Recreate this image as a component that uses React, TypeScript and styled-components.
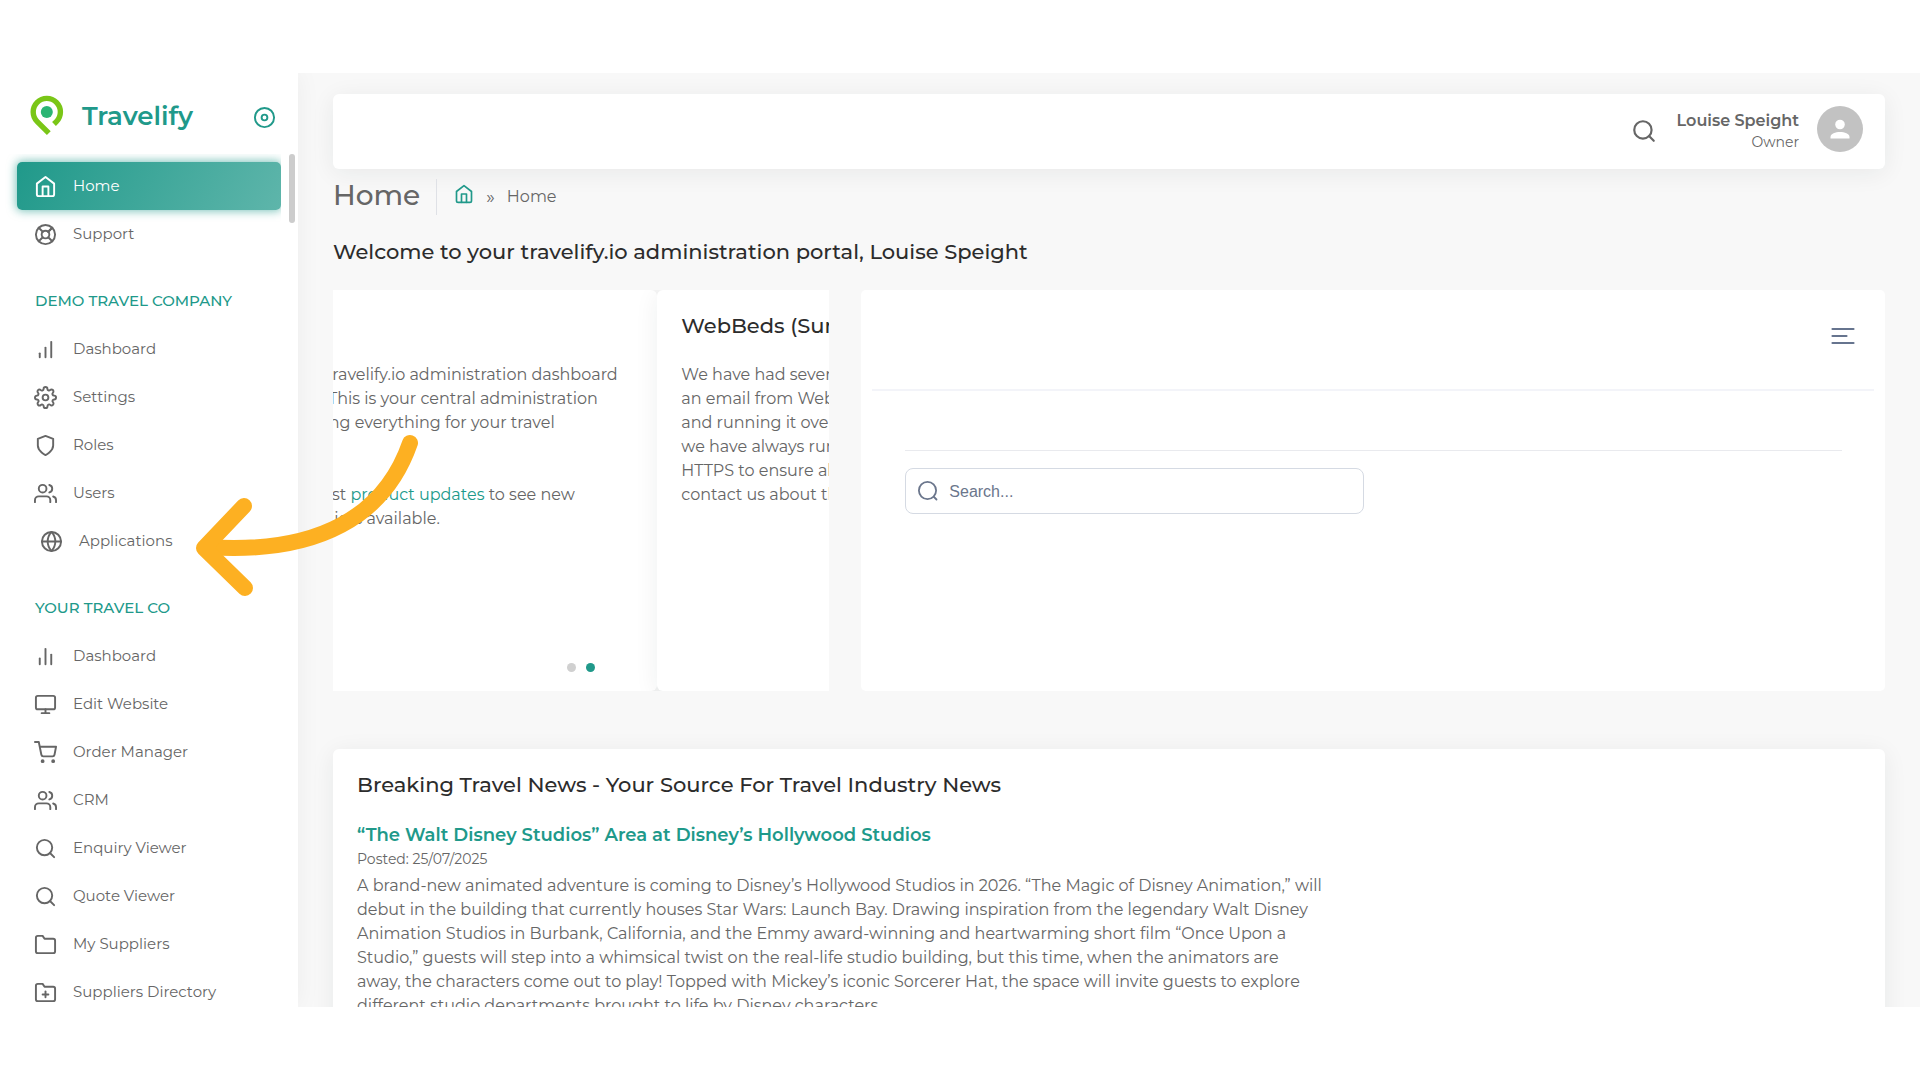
import React from "react";
import styled, { createGlobalStyle, css } from "styled-components";
import type { IconType } from "react-icons";
import {
  FiBarChart,
  FiBarChart2,
  FiDisc,
  FiFolder,
  FiFolderPlus,
  FiGlobe,
  FiHome,
  FiLifeBuoy,
  FiMonitor,
  FiSearch,
  FiSettings,
  FiShield,
  FiShoppingCart,
  FiUsers,
} from "react-icons/fi";

const teal = "#20998a";
const text = "#666666";
const dark = "#2c2c2c";
const softShadow = "0 4px 24px rgba(34, 41, 47, 0.07)";

const GlobalStyle = createGlobalStyle`
  *, *::before, *::after { box-sizing: border-box; }
  body {
    margin: 0;
    background: #ffffff;
    color: ${text};
    font-family: Montserrat, Inter, "Liberation Sans", sans-serif;
    font-size: 16px;
    line-height: 24px;
  }
  h1, h2, h3, p, ul { margin: 0; padding: 0; }
  a { color: ${teal}; text-decoration: none; }
  button { font: inherit; border: 0; padding: 0; background: none; cursor: pointer; }
`;

const Frame = styled.div`
  height: 100vh;
  padding: 73px 0;
  display: flex;
`;

const Shell = styled.div`
  position: relative;
  flex: 1;
  min-width: 0;
  display: flex;
  overflow: hidden;
  background: #f8f8f8;
`;

/* Sidebar */

const Sidebar = styled.aside`
  flex: none;
  width: 298px;
  display: flex;
  flex-direction: column;
  background: #ffffff;
  box-shadow: 0 0 24px rgba(34, 41, 47, 0.05);
`;

const Brand = styled.div`
  flex: none;
  height: 81px;
  padding: 5px 22px 0 30px;
  display: flex;
  align-items: center;
`;

const BrandLink = styled.a`
  flex: 1;
  display: flex;
  align-items: center;
  gap: 18px;
  font-size: 26px;
  line-height: 32px;
  font-weight: 600;
`;

const PinButton = styled.button`
  display: flex;
  padding-top: 2px;
  color: ${teal};
`;

const NavScroll = styled.div`
  flex: 1;
  min-height: 0;
  padding-right: 3px;
  display: flex;
  gap: 8px;
`;

const Nav = styled.nav`
  flex: 1;
  padding-left: 17px;
  padding-top: 8px;
  overflow: hidden;
`;

const ScrollThumb = styled.div`
  width: 6px;
  height: 69px;
  border-radius: 3px;
  background: #cccccc;
`;

const NavList = styled.ul`
  list-style: none;
`;

const NavHeading = styled.h2`
  padding: 31px 0 12px 18px;
  font-size: 15px;
  line-height: 24px;
  font-weight: 500;
  color: ${teal};
  text-transform: uppercase;
`;

const NavLink = styled.a<{ $active?: boolean; $inset?: boolean }>`
  height: 48px;
  padding-left: ${(p) => (p.$inset ? 23 : 17)}px;
  display: flex;
  align-items: center;
  gap: 16px;
  border-radius: 5px;
  font-size: 15px;
  color: ${text};
  svg { flex: none; }
  ${(p) =>
    p.$active &&
    css`
      color: #ffffff;
      background: linear-gradient(118deg, #20998a, rgba(32, 153, 138, 0.72));
      box-shadow: 0 0 10px 1px rgba(32, 153, 138, 0.6);
    `}
`;

/* Main column */

const Main = styled.main`
  flex: 1;
  min-width: 0;
  padding: 21px 35px 0;
  display: flex;
  flex-direction: column;
`;

const TopBar = styled.header`
  flex: none;
  height: 75px;
  padding: 0 22px 5px;
  display: flex;
  align-items: center;
  justify-content: flex-end;
  gap: 20px;
  border-radius: 6px;
  background: #ffffff;
  box-shadow: ${softShadow};
`;

const IconButton = styled.button`
  display: flex;
  padding-top: 4px;
  color: ${text};
`;

const Profile = styled.a`
  display: flex;
  align-items: center;
  gap: 18px;
  color: ${text};
  text-align: right;
`;

const ProfileText = styled.span`
  padding-top: 4px;
`;

const ProfileName = styled.strong`
  display: block;
  line-height: 21px;
  font-weight: 600;
`;

const ProfileRole = styled.span`
  display: block;
  font-size: 14px;
  line-height: 22px;
`;

const Crumbs = styled.div`
  flex: none;
  margin-top: 10px;
  height: 36px;
  display: flex;
  align-items: center;
`;

const PageTitle = styled.h1`
  padding: 0 16px 4px 0;
  font-size: 28px;
  line-height: 32px;
  font-weight: 500;
  border-right: 1px solid #dfe1e6;
`;

const CrumbTrail = styled.nav`
  padding-left: 17px;
  display: flex;
  align-items: center;
  gap: 12px;
  a { display: flex; padding-bottom: 6px; }
`;

const CrumbMark = styled.span`
  font-size: 18px;
`;

const Welcome = styled.h2`
  padding: 22px 0 23px;
  font-size: 21px;
  line-height: 30px;
  font-weight: 500;
  color: ${dark};
`;

const TopRow = styled.section`
  flex: none;
  height: 401px;
  display: grid;
  grid-template-columns: 496fr 1023fr;
  gap: 32px;
`;

const Carousel = styled.div`
  position: relative;
  min-width: 0;
  overflow: hidden;
`;

const Track = styled.div`
  height: 100%;
  display: flex;
  transform: translateX(-172px);
`;

const Slide = styled.article`
  flex: none;
  width: 100%;
  padding: 21px 24px;
  border-radius: 6px;
  background: #ffffff;
  box-shadow: ${softShadow};
  white-space: nowrap;
`;

const CardTitle = styled.h3`
  font-size: 21px;
  line-height: 30px;
  font-weight: 500;
  color: ${dark};
`;

const SlideText = styled.p`
  padding-top: 22px;
`;

const SlideBlock = styled.p`
  padding-top: 48px;
`;

const Line = styled.span`
  display: block;
`;

const Dots = styled.div`
  position: absolute;
  left: 0;
  right: 0;
  bottom: 19px;
  display: flex;
  justify-content: center;
  gap: 10px;
`;

const Dot = styled.button<{ $active?: boolean }>`
  width: 9px;
  height: 9px;
  border-radius: 50%;
  background: ${(p) => (p.$active ? teal : "#d0d0d0")};
`;

const Panel = styled.div`
  padding: 0 11px;
  border-radius: 5px;
  background: #ffffff;
`;

const PanelHead = styled.div`
  height: 101px;
  padding: 0 19px 12px;
  display: flex;
  align-items: center;
  justify-content: flex-end;
  border-bottom: 2px solid #f3f4f9;
`;

const PanelBody = styled.div`
  margin: 59px 32px 0 33px;
  padding-top: 17px;
  border-top: 1px solid #e9eaee;
`;

const SearchBox = styled.label`
  width: 49%;
  height: 46px;
  padding: 0 11px;
  display: flex;
  align-items: center;
  gap: 10px;
  border: 1px solid #d5dae3;
  border-radius: 8px;
  color: #6b768c;
`;

const SearchInput = styled.input`
  flex: 1;
  min-width: 0;
  padding: 1px 0 0;
  border: 0;
  outline: 0;
  background: none;
  font: 16px "Liberation Sans", Arial, sans-serif;
  color: #5f6b82;
  &::placeholder { color: #6b768c; opacity: 1; }
`;

const News = styled.section`
  flex: none;
  margin-top: 58px;
  padding: 21px 24px;
  border-radius: 6px;
  background: #ffffff;
  box-shadow: ${softShadow};
`;

const NewsTitle = styled.h3`
  padding-top: 23px;
  font-size: 18px;
  line-height: 24px;
  font-weight: 600;
`;

const Posted = styled.p`
  font-size: 14px;
  line-height: 24px;
  padding-bottom: 3px;
`;

const Arrow = styled.svg`
  position: absolute;
  left: 190px;
  top: 357px;
  pointer-events: none;
`;

type Item = { label: string; icon: IconType; active?: boolean; inset?: boolean };

const topItems: Item[] = [
  { label: "Home", icon: FiHome, active: true },
  { label: "Support", icon: FiLifeBuoy },
];

const demoItems: Item[] = [
  { label: "Dashboard", icon: FiBarChart },
  { label: "Settings", icon: FiSettings },
  { label: "Roles", icon: FiShield },
  { label: "Users", icon: FiUsers },
  { label: "Applications", icon: FiGlobe, inset: true },
];

const companyItems: Item[] = [
  { label: "Dashboard", icon: FiBarChart2 },
  { label: "Edit Website", icon: FiMonitor },
  { label: "Order Manager", icon: FiShoppingCart },
  { label: "CRM", icon: FiUsers },
  { label: "Enquiry Viewer", icon: FiSearch },
  { label: "Quote Viewer", icon: FiSearch },
  { label: "My Suppliers", icon: FiFolder },
  { label: "Suppliers Directory", icon: FiFolderPlus },
];

const newsLines = [
  "A brand-new animated adventure is coming to Disney’s Hollywood Studios in 2026. “The Magic of Disney Animation,” will",
  "debut in the building that currently houses Star Wars: Launch Bay. Drawing inspiration from the legendary Walt Disney",
  "Animation Studios in Burbank, California, and the Emmy award-winning and heartwarming short film “Once Upon a",
  "Studio,” guests will step into a whimsical twist on the real-life studio building, but this time, when the animators are",
  "away, the characters come out to play! Topped with Mickey’s iconic Sorcerer Hat, the space will invite guests to explore",
  "different studio departments brought to life by Disney characters.",
];

function NavGroup({ items }: { items: Item[] }) {
  return (
    <NavList>
      {items.map(({ label, icon: Icon, active, inset }) => (
        <li key={label}>
          <NavLink href="#" $active={active} $inset={inset}>
            <Icon size={23} />
            {label}
          </NavLink>
        </li>
      ))}
    </NavList>
  );
}

function Logo() {
  return (
    <svg width="34" height="42" viewBox="0 0 34 42" fill="none" aria-hidden="true">
      <path
        d="M24 29 L26.4 26.6 A13.6 13.6 0 1 0 7.2 26.6 L18.8 38.2"
        stroke="#7ac617"
        strokeWidth="5.4"
      />
      <circle cx="16.8" cy="17" r="6" fill="#2bb574" />
    </svg>
  );
}

function Avatar() {
  return (
    <svg width="46" height="46" viewBox="0 0 46 46" aria-hidden="true">
      <circle cx="23" cy="23" r="23" fill="#c2c2c2" />
      <circle cx="23" cy="18.5" r="4.8" fill="#ffffff" />
      <path d="M13.5 32.5 V31 C13.5 27.6 18.5 26 23 26 C27.5 26 32.5 27.6 32.5 31 V32.5 Z" fill="#ffffff" />
    </svg>
  );
}

export default function App() {
  return (
    <Frame>
      <GlobalStyle />
      <Shell>
        <Sidebar>
          <Brand>
            <BrandLink href="#">
              <Logo />
              Travelify
            </BrandLink>
            <PinButton aria-label="Pin menu">
              <FiDisc size={23} />
            </PinButton>
          </Brand>
          <NavScroll>
            <Nav>
              <NavGroup items={topItems} />
              <NavHeading>Demo Travel Company</NavHeading>
              <NavGroup items={demoItems} />
              <NavHeading>Your Travel Co</NavHeading>
              <NavGroup items={companyItems} />
            </Nav>
            <ScrollThumb />
          </NavScroll>
        </Sidebar>

        <Main>
          <TopBar>
            <IconButton aria-label="Search">
              <FiSearch size={26} />
            </IconButton>
            <Profile href="#">
              <ProfileText>
                <ProfileName>Louise Speight</ProfileName>
                <ProfileRole>Owner</ProfileRole>
              </ProfileText>
              <Avatar />
            </Profile>
          </TopBar>

          <Crumbs>
            <PageTitle>Home</PageTitle>
            <CrumbTrail aria-label="Breadcrumb">
              <a href="#" aria-label="Home page">
                <FiHome size={20} />
              </a>
              <CrumbMark>»</CrumbMark>
              <span>Home</span>
            </CrumbTrail>
          </Crumbs>

          <Welcome>Welcome to your travelify.io administration portal, Louise Speight</Welcome>

          <TopRow>
            <Carousel>
              <Track>
                <Slide>
                  <CardTitle>Welcome</CardTitle>
                  <SlideText>
                    <Line>Welcome to your travelify.io administration dashboard</Line>
                    <Line>from home page. This is your central administration</Line>
                    <Line>centre for managing everything for your travel</Line>
                  </SlideText>
                  <SlideBlock>
                    <Line>
                      Check out our latest <a href="#">product updates</a> to see new
                    </Line>
                    <Line>features and suppliers available.</Line>
                  </SlideBlock>
                </Slide>
                <Slide>
                  <CardTitle>WebBeds (Sunhotels)</CardTitle>
                  <SlideText>
                    <Line>We have had several customers receive</Line>
                    <Line>an email from WebBeds about testing</Line>
                    <Line>and running it over HTTPS. Note that</Line>
                    <Line>we have always run this supplier on</Line>
                    <Line>HTTPS to ensure all data is secure, so</Line>
                    <Line>contact us about this if needed.</Line>
                  </SlideText>
                </Slide>
              </Track>
              <Dots>
                <Dot aria-label="Slide 1" />
                <Dot aria-label="Slide 2" $active />
              </Dots>
            </Carousel>

            <Panel>
              <PanelHead>
                <IconButton aria-label="Menu">
                  <svg width="24" height="18" viewBox="0 0 24 18" stroke="#66748e" strokeWidth="2.2" strokeLinecap="round">
                    <path d="M1.5 2 H22.5 M1.5 9 H15.5 M1.5 16 H22.5" />
                  </svg>
                </IconButton>
              </PanelHead>
              <PanelBody>
                <SearchBox>
                  <svg width="22" height="22" viewBox="0 0 22 22" fill="none" stroke="currentColor" strokeWidth="1.8" strokeLinecap="round">
                    <circle cx="10.5" cy="10.5" r="8.6" />
                    <path d="M17 17 L19.5 19.5" />
                  </svg>
                  <SearchInput type="text" aria-label="Search" placeholder="Search..." />
                </SearchBox>
              </PanelBody>
            </Panel>
          </TopRow>

          <News>
            <CardTitle>Breaking Travel News - Your Source For Travel Industry News</CardTitle>
            <NewsTitle>
              <a href="#">“The Walt Disney Studios” Area at Disney’s Hollywood Studios</a>
            </NewsTitle>
            <Posted>Posted: 25/07/2025</Posted>
            <p>
              {newsLines.map((line) => (
                <Line key={line}>{line}</Line>
              ))}
            </p>
          </News>
        </Main>

        <Arrow width="240" height="170" viewBox="190 430 240 170" fill="none" stroke="#fdb022" strokeWidth="16" strokeLinecap="round" strokeLinejoin="round" aria-hidden="true">
          <path d="M410 443 C 385 515 320 555 206 547" />
          <path d="M244 506 L204 548 L245 588" />
        </Arrow>
      </Shell>
    </Frame>
  );
}
